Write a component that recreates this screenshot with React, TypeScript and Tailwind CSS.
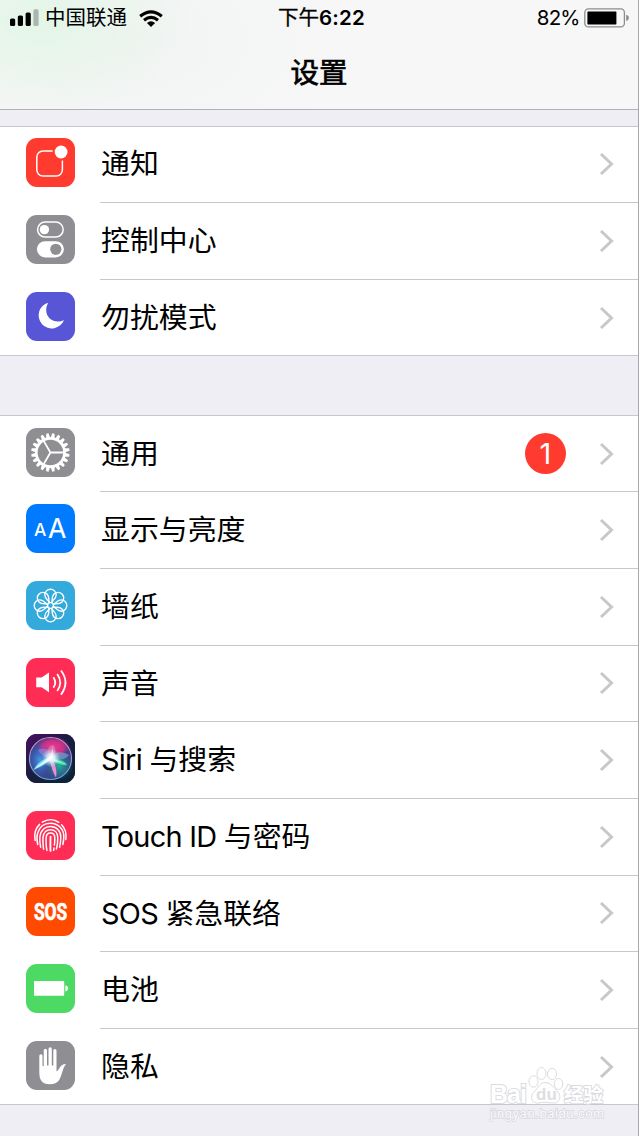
import type { ReactNode } from "react";

type Item = {
  latin?: string;
  label: string;
  color: string;
  icon: ReactNode;
  badge?: number;
};

const TEETH = Array.from({ length: 20 }, (_, i) => i * 18 + 9);
const PETALS = [0, 45, 90, 135, 180, 225, 270, 315];

function NotificationsIcon() {
  return (
    <g>
      <path
        d="M26.6 12.9H17a6.2 6.2 0 0 0-6.2 6.2v12.7a6.2 6.2 0 0 0 6.2 6.2h13.2a6.2 6.2 0 0 0 6.2-6.2V22.6"
        fill="none"
        stroke="#fff"
        strokeWidth="1.5"
      />
      <circle cx="35.1" cy="14" r="6.4" fill="#fff" />
    </g>
  );
}

function ControlCenterIcon() {
  return (
    <g>
      <rect x="11.6" y="7.1" width="25.6" height="15" rx="7.5" fill="none" stroke="#fff" strokeWidth="1.5" />
      <circle cx="18.4" cy="14.6" r="4.7" fill="#fff" />
      <rect x="10.9" y="26.2" width="27" height="16.3" rx="8.15" fill="#fff" />
      <circle cx="29.8" cy="34.3" r="5.6" fill="#8e8e93" />
    </g>
  );
}

function MoonIcon() {
  return <path d="M22.2 10.7A13.1 13.1 0 1 0 38 27.9C30 32.3 20.3 27 20.2 18.5C20.1 15.5 21 12.8 22.2 10.7Z" fill="#fff" />;
}

function GearIcon() {
  return (
    <g transform="translate(24.4 24.5)">
      {TEETH.map((angle) => (
        <path key={angle} d="M-2 -14.6L-1.2 -19.2H1.2L2 -14.6Z" fill="#fff" transform={`rotate(${angle})`} />
      ))}
      <circle r="14.1" fill="none" stroke="#fff" strokeWidth="2.6" />
      <path d="M0 0H14M0 0L-7 -12.1M0 0L-7 12.1" stroke="#fff" strokeWidth="1.8" />
    </g>
  );
}

function DisplayIcon() {
  return (
    <g fill="#fff" className="font-['Inter']">
      <text x="7.9" y="31.7" fontSize="17.4" className="font-medium">A</text>
      <text x="22" y="34" fontSize="26.5" stroke="#fff" strokeWidth="0.2">A</text>
    </g>
  );
}

function WallpaperIcon() {
  return (
    <g transform="translate(24.5 24.5)" fill="none" stroke="#fff" strokeWidth="1.35">
      {PETALS.map((angle) => (
        <path
          key={angle}
          d="M-0.9 -2.8C-2 -4.8 -5.7 -7 -5.7 -10.6A5.7 5.7 0 0 1 5.7 -10.6C5.7 -7 2 -4.8 0.9 -2.8"
          transform={`rotate(${angle})`}
        />
      ))}
      <circle r="2.9" />
    </g>
  );
}

function SoundIcon() {
  return (
    <g>
      <path d="M10.2 19.6H15.6L23 14.6V34.2L15.6 29.2H10.2Z" fill="#fff" />
      <g fill="none" stroke="#fff" strokeWidth="1.8">
        <path d="M27.4 19.2Q31 24.5 27.4 29.7" />
        <path d="M31.2 15.9Q37.2 24.5 31.2 33" />
        <path d="M35 12.5Q44 24.5 35 36.6" />
      </g>
    </g>
  );
}

function SiriIcon() {
  return (
    <g>
      <defs>
        <linearGradient id="siri-bg" x1="0" y1="0" x2="1" y2="1">
          <stop offset="0" stopColor="#4a0f63" />
          <stop offset="0.45" stopColor="#1b1c42" />
          <stop offset="1" stopColor="#0a2438" />
        </linearGradient>
        <linearGradient id="siri-ring" x1="0" y1="0" x2="0" y2="1">
          <stop offset="0" stopColor="#d88cc4" />
          <stop offset="1" stopColor="#5aaccb" />
        </linearGradient>
        <radialGradient id="siri-pink">
          <stop offset="0" stopColor="#ec3c92" />
          <stop offset="0.65" stopColor="#d02e86" stopOpacity="0.9" />
          <stop offset="1" stopColor="#b0246f" stopOpacity="0" />
        </radialGradient>
        <radialGradient id="siri-blue">
          <stop offset="0" stopColor="#4a98ea" />
          <stop offset="1" stopColor="#2f6ed0" stopOpacity="0" />
        </radialGradient>
        <radialGradient id="siri-green">
          <stop offset="0" stopColor="#1fb09b" />
          <stop offset="1" stopColor="#168a80" stopOpacity="0" />
        </radialGradient>
        <radialGradient id="siri-core">
          <stop offset="0" stopColor="#fff" />
          <stop offset="0.4" stopColor="#e8faff" stopOpacity="0.85" />
          <stop offset="1" stopColor="#9fe0ff" stopOpacity="0" />
        </radialGradient>
      </defs>
      <rect width="49" height="49" fill="url(#siri-bg)" />
      <circle cx="24.5" cy="24.5" r="20.5" fill="#3d4590" />
      <ellipse cx="27" cy="13.5" rx="17" ry="11" fill="url(#siri-pink)" />
      <ellipse cx="14" cy="26" rx="12" ry="17" fill="url(#siri-blue)" />
      <ellipse cx="33" cy="32" rx="14" ry="14" fill="url(#siri-green)" />
      <path d="M25 24C19 24 14 20 12 16C20 13 26 16 25 24Z" fill="#a58be0" opacity="0.5" />
      <path d="M25 24C20 16 22 12 27 11C31 15 30 21 25 24Z" fill="#e884b8" opacity="0.6" />
      <path d="M25 24C29 17 36 17 43 21C40 26 31 27 25 24Z" fill="#8bb6da" opacity="0.55" />
      <path d="M25 23C33 25 39 27 41 31C35 32 29 29 24 25Z" fill="#46e6a8" opacity="0.8" />
      <path d="M25 24C21 31 14 33 7.5 36C11 29 18 23 25 24Z" fill="#7cf0f5" opacity="0.85" />
      <path d="M26 23C29 30 31.5 37 30 43.5C27 39 24.5 31 24 25Z" fill="#f78fd4" opacity="0.95" />
      <circle cx="25" cy="23.8" r="9.5" fill="url(#siri-core)" />
      <path d="M8 35.2L25 21.5L26 25Z" fill="#fff" opacity="0.9" />
      <path d="M24 23L41 30.5L26 27Z" fill="#dffff2" opacity="0.6" />
      <path d="M27 24L26.5 12L25 24Z" fill="#fff" opacity="0.7" />
      <circle cx="24.5" cy="24.5" r="21" fill="none" stroke="url(#siri-ring)" strokeWidth="1.2" />
    </g>
  );
}

function TouchIdIcon() {
  return (
    <g fill="none" stroke="#fff" strokeWidth="1.5" strokeLinecap="round">
      <path d="M16.3 11.2C21.5 8 28 8 32.8 11.3" />
      <path d="M9.2 29.5C8 23 9.5 17.3 13.6 13.4" />
      <path d="M35.6 13.7C39.3 17.5 40.8 22 39.8 28.5" />
      <path d="M11.7 33.5C10.7 29 10.8 25 11.6 22.3C13.5 15.5 18.5 12.3 24.5 12.3C32 12.3 37.8 18 37.8 25.5C37.8 28.5 37.4 31 36.8 33.5" />
      <path d="M14.6 36.2C13.8 32.5 13.7 29 13.9 25.8C14.5 19.2 19 15.5 24.5 15.5C30.5 15.5 34.8 20 34.8 26C34.8 30 34.4 33 33.6 36.3" />
      <path d="M17.6 38.2C16.8 34 16.9 30 17 26.2C17.4 21.5 20.5 18.7 24.5 18.7C29 18.7 31.8 22 31.8 26.5C31.8 31 31.4 34.5 30.4 38" />
      <path d="M20.9 39.4C20 35 20 31 20.1 26.5C20.3 23.5 22 21.9 24.5 21.9C27.3 21.9 28.8 24 28.8 27C28.8 30 28.7 32 28.4 34M28 37L27.6 39.3" />
      <path d="M24.5 39.9C24.3 36 24.4 31 24.5 25.6" strokeWidth="1.9" />
    </g>
  );
}

function SosIcon() {
  return (
    <g transform="translate(24.6 33.2) scale(0.74 1)">
      <text textAnchor="middle" fill="#fff" stroke="#fff" strokeWidth="0.7" fontSize="23.5" className="font-['Roboto'] font-bold">
        SOS
      </text>
    </g>
  );
}

function BatteryIcon() {
  return (
    <g fill="#fff">
      <rect x="8" y="17" width="30.2" height="14.7" rx="0.7" />
      <path d="M39.4 21.3C43 22 43 26.7 39.4 27.4Z" />
    </g>
  );
}

function HandIcon() {
  return (
    <path
      d="M13.3 14.8a1.6 1.6 0 0 1 3.2 0V25h1.2V9.3a1.65 1.65 0 0 1 3.3 0V24.6h1.5V7.9a1.65 1.65 0 0 1 3.3 0V24.6h1.5V9.6a1.6 1.6 0 0 1 3.2 0V30.5C32.3 29.5 33.5 26.6 35.2 24.7C36.7 23.1 38.7 22.7 40.2 23.6C38.3 24.6 37.7 27 36.8 29.5C35.7 32.8 35 35.5 33.6 38.3C31.9 41.7 28.7 43.3 23.6 43.3C16.2 43.3 13.3 38.8 13.3 31.5Z"
      fill="#fff"
    />
  );
}

const alerts: Item[] = [
  { label: "通知", color: "bg-[#ff3b30]", icon: <NotificationsIcon /> },
  { label: "控制中心", color: "bg-[#8e8e93]", icon: <ControlCenterIcon /> },
  { label: "勿扰模式", color: "bg-[#5856d6]", icon: <MoonIcon /> },
];

const system: Item[] = [
  { label: "通用", color: "bg-[#8e8e93]", icon: <GearIcon />, badge: 1 },
  { label: "显示与亮度", color: "bg-[#007aff]", icon: <DisplayIcon /> },
  { label: "墙纸", color: "bg-[#34aadc]", icon: <WallpaperIcon /> },
  { label: "声音", color: "bg-[#ff2d55]", icon: <SoundIcon /> },
  { latin: "Siri ", label: "与搜索", color: "bg-[#1b1c42]", icon: <SiriIcon /> },
  { latin: "Touch ID ", label: "与密码", color: "bg-[#ff2d55]", icon: <TouchIdIcon /> },
  { latin: "SOS ", label: "紧急联络", color: "bg-[#ff4a00]", icon: <SosIcon /> },
  { label: "电池", color: "bg-[#4cd964]", icon: <BatteryIcon /> },
  { label: "隐私", color: "bg-[#8e8e93]", icon: <HandIcon /> },
];

function Row({ item, first }: { item: Item; first: boolean }) {
  return (
    <div className="flex h-[76.65px] pl-[26px]">
      <div className={`mt-[12.9px] size-[49px] shrink-0 overflow-hidden rounded-[11px] ${item.color}`}>
        <svg viewBox="0 0 49 49" className="block size-full">
          {item.icon}
        </svg>
      </div>
      <div className={`ml-[25px] flex flex-1 items-center border-t pr-[24px] ${first ? "border-transparent" : "border-[#c8c7cc]"}`}>
        <span className="flex-1 whitespace-pre pl-px pt-[1.2px] text-[28.9px] leading-none">
          {item.latin && <span className="tracking-[-0.72px]">{item.latin}</span>}
          {item.label}
        </span>
        {item.badge && (
          <span className="mr-[33px] flex size-[41px] items-center justify-center rounded-full bg-[#ff3b30] text-[29px] leading-none text-white">
            {item.badge}
          </span>
        )}
        <svg viewBox="0 0 15 24" className="h-[24px] w-[15px]">
          <path d="M2 2L12.5 12L2 22" fill="none" stroke="#c7c7cc" strokeWidth="3" />
        </svg>
      </div>
    </div>
  );
}

function Group({ items }: { items: Item[] }) {
  return (
    <section className="border-y border-[#c8c7cc] bg-white">
      <div className="-mb-[0.3px] -mt-[1.6px]">
        {items.map((item, i) => (
          <Row key={item.label} item={item} first={i === 0} />
        ))}
      </div>
    </section>
  );
}

function StatusBar() {
  return (
    <div className="grid h-[36px] grid-cols-3 items-center pl-[10px] pr-[9px] text-[20.5px] leading-none">
      <div className="flex items-center">
        <svg viewBox="0 0 29 18" className="h-[18px] w-[29px]">
          <rect x="0" y="9.5" width="5.2" height="7.5" rx="1.6" />
          <rect x="7.8" y="6.5" width="5.2" height="10.5" rx="1.6" />
          <rect x="15.6" y="3.5" width="5.2" height="13.5" rx="1.6" />
          <rect x="23.4" y="0.3" width="5.2" height="16.7" rx="1.6" fill="#a9b8ae" />
        </svg>
        <span className="ml-[6px] whitespace-nowrap">中国联通</span>
        <svg viewBox="0 0 24 17" className="ml-[12px] h-[17px] w-[24px]">
          <g fill="none" stroke="#000" strokeWidth="3.1">
            <path d="M1.2 6.2Q12 -2.6 22.8 6.2" />
            <path d="M5 10.3Q12 4.6 19 10.3" />
          </g>
          <path d="M7.9 12.9Q12 9.7 16.1 12.9L12 17Z" />
        </svg>
      </div>
      <div className="pl-[4px] text-center">
        <span className="[-webkit-text-stroke:0.3px_black]">下午</span>
        <span className="font-semibold tracking-[0.15px]">6:22</span>
      </div>
      <div className="flex items-center justify-end">
        <span className="mr-[4.5px] tracking-[-0.9px]">82%</span>
        <svg viewBox="0 0 46 20" className="-mr-px h-[20px] w-[46px]">
          <rect x="0.8" y="0.9" width="39.6" height="18" rx="3.6" fill="none" stroke="#8d8d8d" strokeWidth="1.3" />
          <rect x="3.4" y="3.4" width="29" height="13" rx="0.6" />
          <path d="M42.2 6.8C45.8 7.5 45.8 12.3 42.2 13Z" fill="#8d8d8d" />
        </svg>
      </div>
    </div>
  );
}

function Watermark() {
  return (
    <svg viewBox="0 0 120 58" className="absolute left-[488px] top-[1064px] h-[58px] w-[120px]">
      <g fill="#fff" stroke="#dcdce0" strokeWidth="1">
        <ellipse cx="45.5" cy="17.5" rx="4.5" ry="5.7" />
        <ellipse cx="53.5" cy="9.5" rx="4.5" ry="6" />
        <ellipse cx="64" cy="10" rx="4.5" ry="5.7" />
        <ellipse cx="70.5" cy="20" rx="4.3" ry="5.5" />
        <path d="M57 18.5C63 18.5 66 24 70 28C74 33 71 39 66 39C60 39 56 37.5 51 39C44 40 41 33 46 28C50 24 52 18.5 57 18.5Z" />
        <g className="font-['Liberation_Sans',sans-serif] font-bold" paintOrder="stroke" strokeWidth="2">
          <text x="2" y="38.5" fontSize="25" textLength="37">Bai</text>
          <text x="48" y="36" fontSize="17" fill="#dededf" stroke="none">du</text>
          <text x="76" y="37.5" fontSize="19.5" className="font-['Noto_Sans_CJK_SC',sans-serif]">经验</text>
        </g>
      </g>
      <text
        x="2"
        y="54"
        fontSize="13"
        textLength="114"
        fill="#fafafc"
        stroke="#d6d6da"
        strokeWidth="1.4"
        paintOrder="stroke"
        className="font-['Liberation_Sans',sans-serif]"
      >
        jingyan.baidu.com
      </text>
    </svg>
  );
}

export default function App() {
  return (
    <main className="relative h-[1136px] w-[639px] overflow-hidden border-r border-[#a9a9ad] bg-[#efeef4] font-['Inter','Noto_Sans_CJK_SC',sans-serif] text-black">
      <header className="h-[110px] border-b border-[#b2b2b5] bg-[#f7f7f8] bg-[radial-gradient(ellipse_150px_95px_at_40px_20px,#e3f6e7,transparent),radial-gradient(ellipse_240px_130px_at_110px_40px,#f1f3f2,transparent)]">
        <StatusBar />
        <h1 className="mt-[21.500px] text-center text-[28.5px] leading-[30px] [-webkit-text-stroke:0.7px_black]">设置</h1>
      </header>

      <div className="mt-[16px] flex flex-col gap-[59.3px]">
        <Group items={alerts} />
        <Group items={system} />
      </div>

      <Watermark />
    </main>
  );
}
